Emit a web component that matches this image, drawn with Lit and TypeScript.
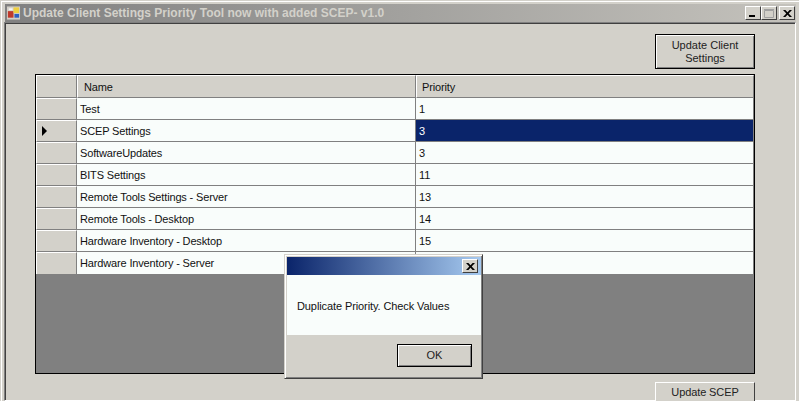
import { LitElement, html, css } from "lit";
import { customElement } from "lit/decorators.js";

const ROWS: [string, string][] = [
  ["Test", "1"],
  ["SCEP Settings", "3"],
  ["SoftwareUpdates", "3"],
  ["BITS Settings", "11"],
  ["Remote Tools Settings - Server", "13"],
  ["Remote Tools - Desktop", "14"],
  ["Hardware Inventory - Desktop", "15"],
  ["Hardware Inventory - Server", ""],
];

@customElement("app-root")
export class AppRoot extends LitElement {
  static styles = css`
    :host { display: block; width: 799px; height: 401px; overflow: hidden; position: relative;
      font-family: "Liberation Sans", Arial, sans-serif; font-size: 11px; color: #111; }
    .win { box-sizing: border-box; width: 799px; height: 401px; background: #d3d1ca; padding: 3px 3px 0 3px;
      border-top: 1px solid #d3d1ca; border-left: 1px solid #d3d1ca; box-shadow: inset 1px 1px 0 #fff;
      display: flex; flex-direction: column; }
    .title { height: 18px; flex: none; margin-left: 1px; background: linear-gradient(90deg, #808080, #c4c2bc);
      display: flex; align-items: center; padding: 0 1px; gap: 2px; }
    .title .cap { font-weight: bold; font-size: 12px; color: #d3d1ca; white-space: nowrap; flex: 1; }
    .wbtns { display: flex; }
    .wb { box-sizing: border-box; width: 16px; height: 14px; background: #d3d1ca;
      border: 1px solid; border-color: #fff #404040 #404040 #fff; display: flex; align-items: center; justify-content: center; }
    .wb svg { display: block; }
    .wb.x { margin-left: 2px; }
    .client { flex: 1; min-height: 0; border: 1px solid; border-color: #808080 #fff #fff #808080;
      box-shadow: inset 1px 1px 0 #404040; padding: 11px 40px 0 30px; display: flex; flex-direction: column; align-items: flex-end; }
    .btn { box-sizing: border-box; background: #d3d1ca; border: 1px solid #000; box-shadow: inset 1px 1px 0 #fff, inset -1px -1px 0 #808080;
      color: #222; text-align: center; line-height: 13px; display: flex; align-items: center; justify-content: center; flex: none; }
    .b1 { width: 100px; height: 35px; }
    .b2 { width: 100px; height: 34px; margin-top: 8px; border-color: #fff #404040 #404040 #fff; box-shadow: none; align-items: flex-start; padding-top: 3px; letter-spacing: -0.1px; }
    .grid { box-sizing: border-box; width: 720px; height: 300px; flex: none; margin-top: 5px; background: #808080; border: 1px solid #000; }
    .row { display: grid; grid-template-columns: 41px 339px 338px; height: 22px; letter-spacing: -0.15px; }
    .row.head { height: 23px; }
    .row .h { background: #d3d1ca; box-sizing: border-box; border-right: 1px solid #808080; border-bottom: 1px solid #808080;
      border-left: 1px solid #fff; border-top: 1px solid #fff; display: flex; align-items: center; }
    .row .c { background: #f9fdfb; box-sizing: border-box; border-right: 1px solid #808080; border-bottom: 1px solid #808080;
      display: flex; align-items: center; padding-left: 3px; white-space: nowrap; }
    .row.head .c { background: #d3d1ca; padding-left: 6px; border-top: 1px solid #fff; border-left: 1px solid #fff; }
    .row.head .c:last-child { padding-left: 5px; }
    .row.last .c, .row.last .h { border-bottom: none; }
    .row .c.sel { background: #0a246a; color: #fff; }
    .row .arrow { width: 0; height: 0; border-left: 5px solid #000; border-top: 5px solid transparent; border-bottom: 5px solid transparent; margin-left: 5px; }
    .dlg { position: absolute; left: 284px; top: 254px; width: 199px; height: 125px; box-sizing: border-box; background: #d3d1ca;
      border: 1px solid; border-color: #d3d1ca #404040 #404040 #d3d1ca; box-shadow: inset 1px 1px 0 #fff, inset -1px -1px 0 #808080;
      padding: 2px 1px 2px 2px; display: flex; flex-direction: column; }
    .dt { height: 18px; flex: none; background: linear-gradient(90deg, #0a246a, #a6caf0); display: flex; justify-content: flex-end; align-items: center; padding-right: 3px; }
    .dbody { height: 60px; flex: none; background: #f9fdfb; box-sizing: border-box; padding: 25px 0 0 10px; white-space: nowrap; letter-spacing: -0.1px; }
    .dfoot { flex: 1; display: flex; justify-content: flex-end; padding: 9px 9px 0 0; }
    .ok { width: 75px; height: 23px; }
  `;

  private closeIcon() {
    return html`<svg width="9" height="7" viewBox="0 0 9 7"><path d="M0 0h2.4l2.1 2.2L6.6 0H9L5.7 3.5 9 7H6.6L4.5 4.8 2.4 7H0l3.3-3.5z" fill="#000"/></svg>`;
  }

  render() {
    return html`
      <div class="win">
        <div class="title">
          <svg width="15" height="16" viewBox="0 0 16 16" style="flex:none">
            <rect x="0.5" y="0.5" width="15" height="15" fill="#d4d0c8" stroke="#808080"/>
            <rect x="2" y="6" width="6" height="7" fill="#c0392b"/>
            <rect x="8" y="2" width="6" height="6" fill="#f0d040"/>
            <rect x="9" y="9" width="5" height="4" fill="#3060c0"/>
            <rect x="3" y="3" width="4" height="2" fill="#f4f4f4"/>
          </svg>
          <div class="cap">Update Client Settings Priority Tool now with added SCEP- v1.0</div>
          <div class="wbtns">
            <div class="wb"><svg width="8" height="8" viewBox="0 0 8 8"><rect x="0" y="6" width="6" height="2" fill="#000"/></svg></div>
            <div class="wb"><svg width="10" height="9" viewBox="0 0 10 9"><path d="M.5 1.5h9v7h-9z M0 .5h10" fill="none" stroke="#a0a0a0"/></svg></div>
            <div class="wb x">${this.closeIcon()}</div>
          </div>
        </div>
        <div class="client">
          <div class="btn b1">Update Client<br />Settings</div>
          <div class="grid">
            <div class="row head"><div class="h"></div><div class="c">Name</div><div class="c">Priority</div></div>
            ${ROWS.map(
              ([n, p], i) => html`<div class="row ${i === ROWS.length - 1 ? "last" : ""}">
                <div class="h">${i === 1 ? html`<div class="arrow"></div>` : ""}</div>
                <div class="c">${n}</div>
                <div class="c ${i === 1 ? "sel" : ""}">${p}</div>
              </div>`
            )}
          </div>
          <div class="btn b2">Update SCEP</div>
        </div>
      </div>
      <div class="dlg">
        <div class="dt"><div class="wb">${this.closeIcon()}</div></div>
        <div class="dbody">Duplicate Priority. Check Values</div>
        <div class="dfoot"><div class="btn ok">OK</div></div>
      </div>
    `;
  }
}
